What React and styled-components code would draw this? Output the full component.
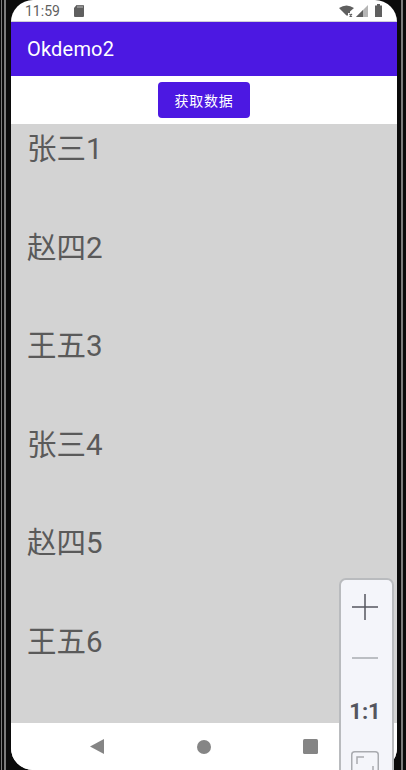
import React from "react";
import styled, { createGlobalStyle } from "styled-components";

const GlobalStyle = createGlobalStyle`
  html, body {
    margin: 0;
    padding: 0;
    width: 406px;
    height: 770px;
    overflow: hidden;
    background: #0b0b0b;
    font-family: Roboto, "Noto Sans CJK SC", sans-serif;
  }
`;

const Frame = styled.div`
  position: relative;
  width: 406px;
  height: 770px;
  padding: 0 9px 0 11px;
  box-sizing: border-box;
  background: #0b0b0b;
  overflow: hidden;
`;

const Edge = styled.div`
  position: absolute;
  top: 0;
  bottom: 0;
  left: ${(props) => props.x}px;
  width: ${(props) => props.w}px;
  background: #7c7c7c;
`;

const Screen = styled.div`
  display: flex;
  flex-direction: column;
  height: 770px;
  background: #fff;
  border-radius: 22px;
  overflow: hidden;
`;

const StatusBar = styled.div`
  display: flex;
  align-items: center;
  justify-content: space-between;
  height: 21px;
  padding: 0 15px 0 14px;
  border-bottom: 1px solid #cfcfd6;
  color: #5f5f5f;
`;

const StatusLeft = styled.div`
  display: flex;
  align-items: center;
  gap: 14px;
`;

const Time = styled.span`
  font-size: 14px;
`;

const StatusIcons = styled.div`
  display: flex;
  align-items: center;
  gap: 2px;
`;

const AppBar = styled.div`
  display: flex;
  align-items: center;
  height: 54px;
  padding-left: 16px;
  background: #4c18e2;
  color: #fff;
  font-size: 20px;
  letter-spacing: 0.2px;
`;

const Toolbar = styled.div`
  display: flex;
  justify-content: center;
  align-items: center;
  height: 48px;
  background: #fff;
`;

const FetchButton = styled.button`
  width: 92px;
  height: 36px;
  padding: 0;
  border: 0;
  border-radius: 4px;
  background: #4c18e2;
  color: #fff;
  font-family: inherit;
  font-size: 14px;
  letter-spacing: 0.8px;
`;

const List = styled.div`
  display: flex;
  flex-direction: column;
  flex: 1;
  padding-left: 16px;
  background: #d3d3d3;
  overflow: hidden;
`;

const Item = styled.div`
  height: 98.6px;
  flex-shrink: 0;
  font-size: 29.500px;
  line-height: 50px;
  color: #5a5a5a;
`;

const NavBar = styled.div`
  display: flex;
  align-items: center;
  justify-content: space-between;
  height: 47px;
  padding: 0 79px;
  box-sizing: border-box;
  flex-shrink: 0;
  background: #fff;
`;

const ZoomPanel = styled.div`
  position: absolute;
  left: 339px;
  top: 578px;
  width: 55px;
  height: 210px;
  padding-right: 3px;
  box-sizing: border-box;
  display: flex;
  flex-direction: column;
  align-items: center;
  background: #f4f5fa;
  border: 2px solid #b9bbbe;
  border-radius: 7px;
`;

const ZoomIcon = styled.svg`
  margin-top: ${(props) => props.top}px;
  display: block;
  flex-shrink: 0;
`;

const ZoomLabel = styled.div`
  margin-top: 43px;
  height: 20px;
  font-family: Roboto, sans-serif;
  font-size: 22px;
  line-height: 20px;
  font-weight: 700;
  color: #54565f;
`;

const names = ["张三1", "赵四2", "王五3", "张三4", "赵四5", "王五6"];

const App = () => {
  return (
    <Frame>
      <GlobalStyle />
      <Edge x={1} w={1} />
      <Edge x={4} w={2} />
      <Edge x={401} w={2} />
      <Screen>
        <StatusBar>
          <StatusLeft>
            <Time>11:59</Time>
            <svg width="10" height="12" viewBox="0 0 10 12">
              <path d="M2.500 0H9a1 1 0 0 1 1 1v10a1 1 0 0 1-1 1H1a1 1 0 0 1-1-1V3z" fill="#5f5f5f" />
              <path d="M4 0.500v2.500M6 0.500v2.500M8 0.500v2.500" stroke="#fff" strokeWidth="0.600" />
            </svg>
          </StatusLeft>
          <StatusIcons>
            <svg width="15" height="12" viewBox="0 0 15 12">
              <path d="M0 3Q7.500-2 15 3L11 6.500V8H9v2.500H7.500z" fill="#5f5f5f" />
              <path d="M10.500 9l2.500 2.500m0-2.500l-2.500 2.500" stroke="#5f5f5f" strokeWidth="1.100" />
            </svg>
            <svg width="12" height="12" viewBox="0 0 12 12">
              <path d="M12 0v12H0z" fill="#b5b5b5" />
              <path d="M7 5v7H0z" fill="#5f5f5f" />
            </svg>
            <svg width="7" height="13" viewBox="0 0 7 13" style={{ marginLeft: 5 }}>
              <path d="M2 0h3v1.500h2V13H0V1.500h2z" fill="#5f5f5f" />
            </svg>
          </StatusIcons>
        </StatusBar>
        <AppBar>Okdemo2</AppBar>
        <Toolbar>
          <FetchButton>获取数据</FetchButton>
        </Toolbar>
        <List>
          {names.map((name) => (
            <Item key={name}>{name}</Item>
          ))}
        </List>
        <NavBar>
          <svg width="14" height="15" viewBox="0 0 14 15">
            <path d="M14 0v15L0 7.500z" fill="#858585" />
          </svg>
          <svg width="14" height="14" viewBox="0 0 14 14">
            <circle cx="7" cy="7" r="7" fill="#858585" />
          </svg>
          <svg width="15" height="15" viewBox="0 0 15 15">
            <rect width="15" height="15" rx="1.500" fill="#858585" />
          </svg>
        </NavBar>
      </Screen>
      <ZoomPanel>
        <ZoomIcon top={14} width="26" height="26" viewBox="0 0 26 26">
          <path d="M13 0v26M0 13h26" stroke="#54565f" strokeWidth="1.500" />
        </ZoomIcon>
        <ZoomIcon top={37} width="26" height="2" viewBox="0 0 26 2">
          <path d="M0 1h26" stroke="#a9abb0" strokeWidth="1.500" />
        </ZoomIcon>
        <ZoomLabel>1:1</ZoomLabel>
        <ZoomIcon top={29} width="28" height="28" viewBox="0 0 28 28">
          <rect x="0.750" y="0.750" width="26.500" height="26.500" rx="3" fill="none" stroke="#a9abb0" strokeWidth="1.500" />
          <path d="M6 13V6h7M22 15v7h-7" fill="none" stroke="#a9abb0" strokeWidth="1.500" />
        </ZoomIcon>
      </ZoomPanel>
    </Frame>
  );
};

export default App;
